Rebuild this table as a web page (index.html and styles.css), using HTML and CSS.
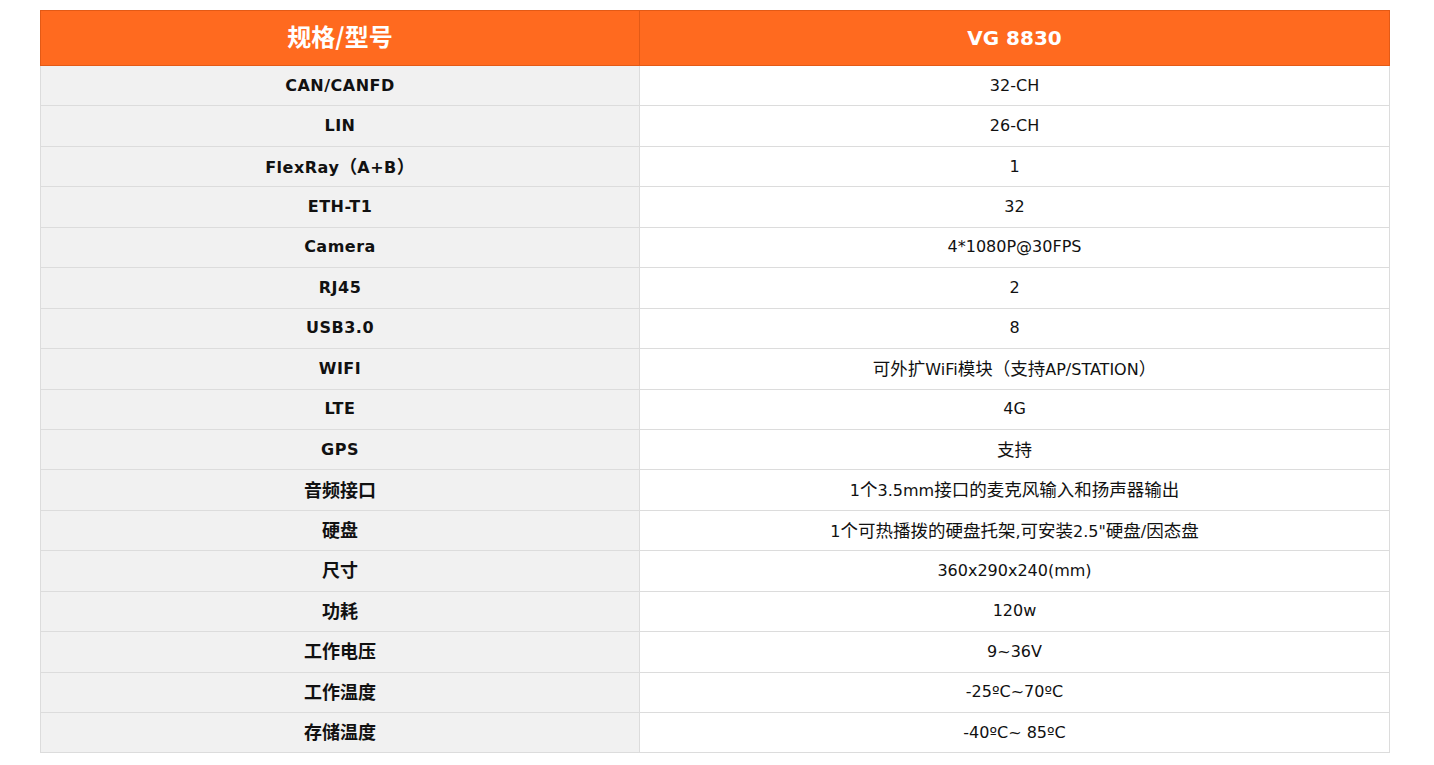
FILE: index.html
```html
<!DOCTYPE html>
<html lang="zh-CN">
<head>
<meta charset="utf-8">
<title>规格/型号 VG 8830</title>
<link rel="stylesheet" href="styles.css">
</head>
<body>
<table class="spec">
  <thead>
    <tr><th class="c-key"><span class="zh">规格/型号</span></th><th class="c-val">VG 8830</th></tr>
  </thead>
  <tbody>
    <tr><td class="c-key">CAN/CANFD</td><td class="c-val">32-CH</td></tr>
    <tr><td class="c-key">LIN</td><td class="c-val">26-CH</td></tr>
    <tr><td class="c-key">FlexRay<span class="zh">（</span>A+B<span class="zh">）</span></td><td class="c-val">1</td></tr>
    <tr><td class="c-key">ETH-T1</td><td class="c-val">32</td></tr>
    <tr><td class="c-key">Camera</td><td class="c-val">4*1080P@30FPS</td></tr>
    <tr><td class="c-key">RJ45</td><td class="c-val">2</td></tr>
    <tr><td class="c-key">USB3.0</td><td class="c-val">8</td></tr>
    <tr><td class="c-key">WIFI</td><td class="c-val"><span class="zh">可外扩</span>WiFi<span class="zh">模块（支持</span>AP/STATION<span class="zh">）</span></td></tr>
    <tr><td class="c-key">LTE</td><td class="c-val">4G</td></tr>
    <tr><td class="c-key">GPS</td><td class="c-val"><span class="zh">支持</span></td></tr>
    <tr><td class="c-key"><span class="zh">音频接口</span></td><td class="c-val">1<span class="zh">个</span>3.5mm<span class="zh">接口的麦克风输入和扬声器输出</span></td></tr>
    <tr><td class="c-key"><span class="zh">硬盘</span></td><td class="c-val">1<span class="zh">个可热播拨的硬盘托架</span>,<span class="zh">可安装</span>2.5"<span class="zh">硬盘</span>/<span class="zh">因态盘</span></td></tr>
    <tr><td class="c-key"><span class="zh">尺寸</span></td><td class="c-val">360x290x240(mm)</td></tr>
    <tr><td class="c-key"><span class="zh">功耗</span></td><td class="c-val">120w</td></tr>
    <tr><td class="c-key"><span class="zh">工作电压</span></td><td class="c-val">9~36V</td></tr>
    <tr><td class="c-key"><span class="zh">工作温度</span></td><td class="c-val">-25ºC~70ºC</td></tr>
    <tr><td class="c-key"><span class="zh">存储温度</span></td><td class="c-val">-40ºC~ 85ºC</td></tr>
  </tbody>
</table>
</body>
</html>
```

FILE: styles.css
```css
html, body {
  margin: 0;
  padding: 0;
  background: #ffffff;
}
body {
  padding: 10px 0 0 40px;
  font-family: "DejaVu Sans", "Noto Sans CJK SC", sans-serif;
  font-size: 16px;
  color: #111111;
}
.spec {
  width: 1350px;
  border-collapse: collapse;
  table-layout: fixed;
}
.spec .zh {
  font-family: "Noto Sans CJK SC", sans-serif;
  font-size: 17.5px;
  line-height: 20px;
}
.spec th {
  background: #ff6a1f;
  color: #ffffff;
  font-weight: bold;
  font-size: 20px;
  height: 53px;
  padding: 0 0 1px 0;
  border: 1px solid #e35a16;
  text-align: center;
  vertical-align: middle;
  line-height: 26px;
}
.spec th .zh {
  font-size: 24px;
  line-height: 26px;
}
.spec td {
  height: 39.45px;
  padding: 0;
  border: 1px solid #dcdcdc;
  text-align: center;
  vertical-align: middle;
  line-height: 20px;
}
.spec .c-key {
  width: 598px;
}
.spec td.c-key {
  background: #f1f1f1;
  font-weight: bold;
  letter-spacing: 0.5px;
}
.spec td.c-key .zh {
  font-size: 18px;
  letter-spacing: 0;
}
.spec td.c-val {
  background: #ffffff;
}
```
